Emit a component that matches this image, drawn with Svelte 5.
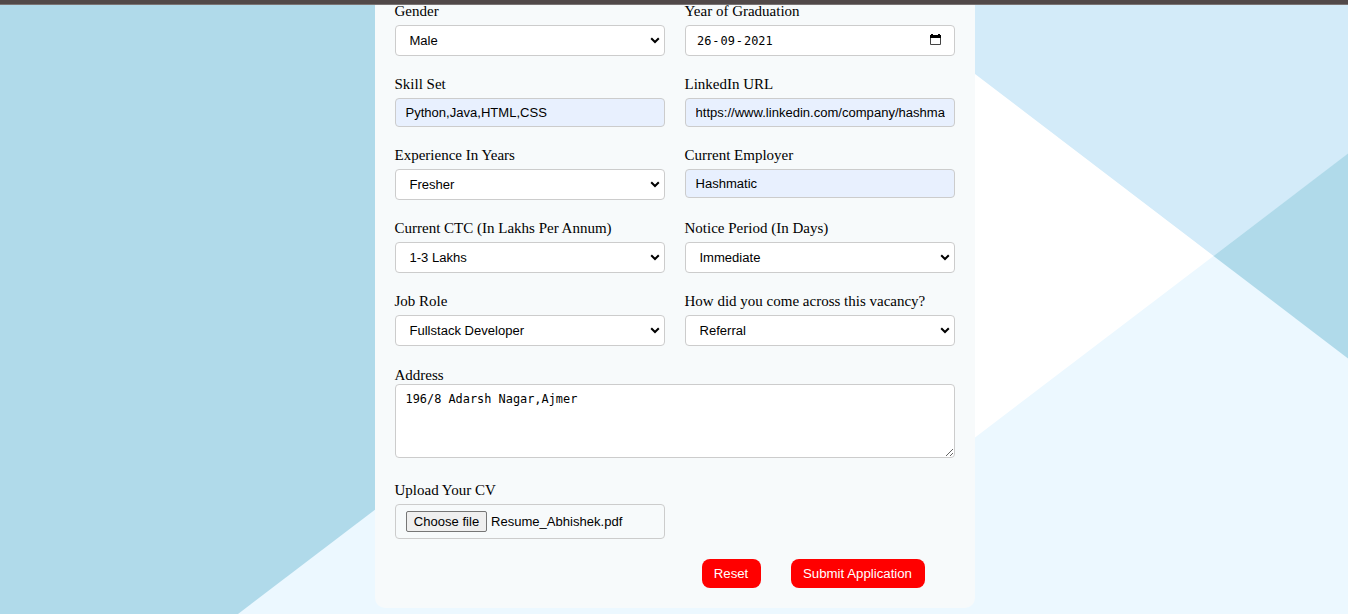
<script>
  const rows = [
    [
      { id: 'gender', label: 'Gender', type: 'select', value: 'Male' },
      { id: 'graduation', label: 'Year of Graduation', type: 'date', value: ['26', '09', '2021'] }
    ],
    [
      { id: 'skills', label: 'Skill Set', type: 'text', value: 'Python,Java,HTML,CSS' },
      { id: 'linkedin', label: 'LinkedIn URL', type: 'text', value: 'https://www.linkedin.com/company/hashma' }
    ],
    [
      { id: 'experience', label: 'Experience In Years', type: 'select', value: 'Fresher' },
      { id: 'employer', label: 'Current Employer', type: 'text', value: 'Hashmatic' }
    ],
    [
      { id: 'ctc', label: 'Current CTC (In Lakhs Per Annum)', type: 'select', value: '1-3 Lakhs' },
      { id: 'notice', label: 'Notice Period (In Days)', type: 'select', value: 'Immediate' }
    ],
    [
      { id: 'role', label: 'Job Role', type: 'select', value: 'Fullstack Developer' },
      { id: 'source', label: 'How did you come across this vacancy?', type: 'select', value: 'Referral' }
    ]
  ];
  let address = '196/8 Adarsh Nagar,Ajmer';
</script>

<div class="page">
  <svg class="backdrop" viewBox="0 0 1348 614" aria-hidden="true">
    <rect width="1348" height="614" fill="#ecf8ff" />
    <path d="M0 0H975V53L238 614H0Z" fill="#b0daea" />
    <path d="M877 0H1348V154L1213.5 256Z" fill="#d3ebf9" />
    <path d="M975 74L1213.5 256L975 437.5Z" fill="#fff" />
    <path d="M1213.5 256L1348 153.5V358.5Z" fill="#b0daea" />
  </svg>
  <header class="bar"></header>
  <form class="card">
    {#each rows as row}
      <div class="row">
        {#each row as field}
          <div class="field">
            <label for={field.id}>{field.label}</label>
            {#if field.type === 'select'}
              <div class="picker">
                <select id={field.id}><option>{field.value}</option></select>
                <svg width="10" height="7" viewBox="0 0 10 7" aria-hidden="true">
                  <path d="M1.2 1.2L5 5L8.8 1.2" fill="none" stroke="#000" stroke-width="2" />
                </svg>
              </div>
            {:else if field.type === 'date'}
              <div class="date" id={field.id}>
                <span class="parts">
                  <span>{field.value[0]}</span><i>-</i><span>{field.value[1]}</span><i>-</i><span>{field.value[2]}</span>
                </span>
                <svg width="11" height="12" viewBox="0 0 11 12" aria-hidden="true">
                  <path d="M0 1h11v3H0zM1 0h2v1H1zM8 0h2v1H8z" fill="#000" />
                  <path d="M.5 4v6.5h10V4" fill="none" stroke="#444" />
                </svg>
              </div>
            {:else}
              <input id={field.id} type="text" value={field.value} />
            {/if}
          </div>
        {/each}
      </div>
    {/each}
    <div class="field address">
      <label for="address">Address</label>
      <textarea id="address" spellcheck="false" bind:value={address}></textarea>
    </div>
    <div class="field upload">
      <label for="cv">Upload Your CV</label>
      <div class="file">
        <button type="button" id="cv">Choose file</button>
        <span>Resume_Abhishek.pdf</span>
      </div>
    </div>
    <div class="actions">
      <button type="reset">Reset</button>
      <button type="submit">Submit Application</button>
    </div>
  </form>
</div>

<style>
  :global(body) { margin: 0; overflow: hidden; }
  .page {
    position: relative;
    height: 614px;
    overflow: hidden;
    font-family: "Liberation Serif", "Times New Roman", serif;
    color: #000;
  }
  .backdrop { position: absolute; inset: 0; width: 1348px; height: 614px; }
  .bar {
    position: absolute;
    inset: 0 0 auto;
    z-index: 2;
    height: 5px;
    box-sizing: border-box;
    background: #514949;
    border-bottom: 1px solid #797373;
  }
  .card {
    position: relative;
    box-sizing: border-box;
    width: 600px;
    height: 608px;
    margin: 0 auto 0 375px;
    padding: 3px 20px 0;
    background: #f7fafb;
    border-radius: 0 0 10px 10px;
  }
  .row { display: flex; gap: 20px; margin-bottom: 20px; }
  .field { display: flex; flex-direction: column; width: 270px; }
  label { height: 17px; margin: 0 0 5px -0.5px; font-size: 15px; line-height: 17px; white-space: nowrap; }
  select, input, textarea, .date, .file {
    box-sizing: border-box;
    width: 100%;
    margin: 0;
    border: 1px solid #ccc;
    border-radius: 4px;
    background: #fff;
    color: #000;
    font: 13.05px "Liberation Sans", Arial, sans-serif;
  }
  .picker { position: relative; display: flex; }
  .picker svg { position: absolute; right: 5px; top: 12px; pointer-events: none; }
  select { height: 31px; padding: 0 20px 0 13.5px; appearance: none; }
  input { height: 29px; padding: 0 9.5px; background: #e8f0fe; }
  .date { display: flex; align-items: center; justify-content: space-between; height: 31px; padding: 0 13px 0 11px; }
  .date svg { margin-bottom: 1px; }
  .parts { display: flex; padding-top: 1px; font: 11.9px/15px "DejaVu Sans Mono", monospace; }
  .parts i { padding: 0 1px; font-style: normal; }
  .address { width: 560px; padding-top: 1px; }
  .address label { margin-bottom: 0; }
  textarea { height: 74px; padding: 7px 9.5px; font: 11.9px/15px "DejaVu Sans Mono", monospace; }
  .upload { margin-top: 24px; }
  .file { display: flex; align-items: center; gap: 4px; height: 35px; padding: 0 10px; background: transparent; }
  .file button {
    box-sizing: border-box;
    width: 81px;
    height: 21px;
    padding: 0;
    border: 1px solid #767676;
    border-radius: 2px;
    background: #efefef;
    color: #000;
    font: inherit;
  }
  .actions { display: flex; justify-content: flex-end; gap: 30px; margin: 20px 30px 0 0; }
  .actions button {
    width: 134px;
    height: 29px;
    padding: 0 1px 0 0;
    border: 0;
    border-radius: 8px;
    background: #f00;
    color: #fff;
    font: 13.25px "Liberation Sans", Arial, sans-serif;
  }
  .actions button[type="reset"] { width: 59px; }
</style>
